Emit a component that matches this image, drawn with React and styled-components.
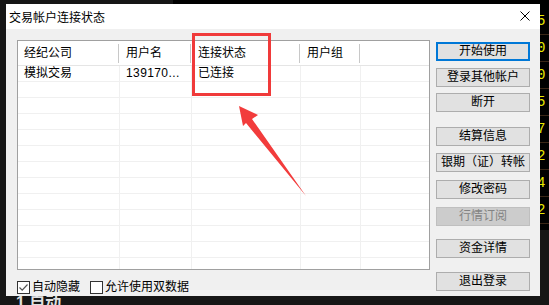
import React from "react";
import styled, { createGlobalStyle } from "styled-components";

const Global = createGlobalStyle`
  html, body { margin: 0; padding: 0; background: #121212; }
  * { box-sizing: border-box; }
`;

const FONT = `"Liberation Sans", "Noto Sans CJK SC", sans-serif`;

const Root = styled.div`
  position: relative;
  width: 549px;
  height: 305px;
  overflow: hidden;
  background: #161616;
  padding: 4px 9px 9px 6px;
  font-family: ${FONT};
  font-size: 12px;
  color: #000;
`;

/* backdrop app behind the dialog */
const QuoteColumn = styled.div`
  position: absolute;
  left: 535px;
  top: 0;
  width: 14px;
  height: 230px;
  background: #000;
  display: flex;
  flex-direction: column;
  padding-top: 8px;
`;
const QuoteCell = styled.div`
  height: 27px;
  border-bottom: 1px solid #3a2616;
  color: #e8e800;
  font-family: "Liberation Mono", monospace;
  font-size: 14px;
  line-height: 26px;
  padding-left: 2px;
`;
const TopStrip = styled.div`
  position: absolute;
  left: 173px;
  top: 0;
  width: 376px;
  height: 4px;
  background: #000;
`;
const BottomText = styled.div`
  position: absolute;
  left: 16px;
  top: 289px;
  color: #e0e0e0;
  font-size: 16px;
  font-weight: bold;
  font-family: ${FONT};
`;

const Dialog = styled.div`
  position: relative;
  z-index: 1;
  width: 534px;
  height: 292px;
  display: flex;
  flex-direction: column;
  background: #f0f0f0;
`;

const TitleBar = styled.div`
  height: 25px;
  background: #fff;
  display: flex;
  align-items: center;
  justify-content: space-between;
  padding: 0 10px 1px 3px;
  font-size: 12px;
`;

const CloseBox = styled.div`
  width: 10px;
  height: 10px;
  display: flex;
`;

const Body = styled.div`
  flex: 1;
  display: grid;
  grid-template-columns: 413px 94px;
  grid-template-rows: 230px auto;
  column-gap: 6px;
  row-gap: 7px;
  padding: 11px 10px 0 11px;
`;

const ListBox = styled.div`
  border: 1px solid #a0a0a0;
  background: #fff;
  overflow: hidden;
`;

const Row = styled.div`
  display: grid;
  grid-template-columns: 102px 72px 109px 60px 1fr;
  height: ${(p) => (p.$header ? 25 : 16)}px;
  border-bottom: 1px solid ${(p) => (p.$header ? "#e5e5e5" : "#f0f0f0")};
`;

const Cell = styled.div`
  display: flex;
  align-items: center;
  padding-left: 6px;
  white-space: nowrap;
  overflow: hidden;
  font-size: 12px;
  line-height: 15px;
  letter-spacing: ${(p) => (p.$spaced ? "0.4px" : "0")};
  border-right: 1px solid ${(p) => (p.$last || p.$header ? "transparent" : "#f0f0f0")};
  position: relative;
  ${(p) =>
    p.$header && !p.$last
      ? `&::after{content:"";position:absolute;right:0;top:3px;bottom:2px;width:1px;background:#c8c8c8;}`
      : ""}
`;

const ButtonCol = styled.div`
  grid-row: 1 / span 2;
  grid-column: 2;
  display: flex;
  flex-direction: column;
  padding-top: 2px;
`;

const Btn = styled.button`
  height: 19px;
  width: 94px;
  margin-top: ${(p) => p.$mt || 0}px;
  padding: 0;
  font-family: ${FONT};
  font-size: 12px;
  line-height: 15px;
  color: ${(p) => (p.disabled ? "#838383" : "#000")};
  background: ${(p) => (p.disabled ? "#cccccc" : "#e1e1e1")};
  border: ${(p) =>
    p.$default ? "2px solid #0078d7" : p.disabled ? "1px solid #bfbfbf" : "1px solid #adadad"};
  border-radius: 0;
  display: flex;
  align-items: center;
  justify-content: center;
`;

const CheckRow = styled.div`
  grid-row: 2;
  grid-column: 1;
  display: flex;
  align-items: center;
  padding-top: 1px;
`;

const CheckLabel = styled.label`
  display: flex;
  align-items: center;
  gap: 2px;
  margin-right: ${(p) => p.$mr || 0}px;
  font-size: 12px;
  line-height: 14px;
`;

const Box = styled.span`
  width: 13px;
  height: 13px;
  border: 1px solid #333;
  background: #fff;
  display: inline-flex;
  align-items: center;
  justify-content: center;
`;

const Overlay = styled.svg`
  position: absolute;
  left: 0;
  top: 0;
  z-index: 2;
  pointer-events: none;
`;

const columns = ["经纪公司", "用户名", "连接状态", "用户组", ""];

const buttons = [
  { label: "开始使用", mt: 0, def: true },
  { label: "登录其他帐户", mt: 7 },
  { label: "断开", mt: 6 },
  { label: "结算信息", mt: 15 },
  { label: "银期（证）转帐", mt: 7 },
  { label: "修改密码", mt: 8 },
  { label: "行情订阅", mt: 8, disabled: true },
  { label: "资金详情", mt: 13 },
  { label: "退出登录", mt: 14 },
];

const quotes = ["5", "0", "0", "5", "7", "2", "4", "2"];

export default function App() {
  const emptyRows = Array.from({ length: 12 });
  return (
    <Root>
      <Global />
      <TopStrip />
      <QuoteColumn>
        {quotes.map((q, i) => (
          <QuoteCell key={i}>{q}</QuoteCell>
        ))}
      </QuoteColumn>
      <BottomText>1.自动</BottomText>

      <Dialog>
        <TitleBar>
          <span>交易帐户连接状态</span>
          <CloseBox>
            <svg width="10" height="10" viewBox="0 0 10 10">
              <path d="M0.5 0.5 L9.5 9.5 M9.5 0.5 L0.5 9.5" stroke="#000" strokeWidth="1" />
            </svg>
          </CloseBox>
        </TitleBar>
        <Body>
          <ListBox>
            <Row $header>
              {columns.map((c, i) => (
                <Cell key={i} $header $last={i === 4}>
                  {c}
                </Cell>
              ))}
            </Row>
            <Row>
              <Cell>模拟交易</Cell>
              <Cell $spaced>139170...</Cell>
              <Cell>已连接</Cell>
              <Cell />
              <Cell $last />
            </Row>
            {emptyRows.map((_, r) => (
              <Row key={r}>
                <Cell />
                <Cell />
                <Cell />
                <Cell />
                <Cell $last />
              </Row>
            ))}
          </ListBox>
          <ButtonCol>
            {buttons.map((b) => (
              <Btn key={b.label} $mt={b.mt} $default={b.def} disabled={b.disabled}>
                {b.label}
              </Btn>
            ))}
          </ButtonCol>
          <CheckRow>
            <CheckLabel $mr={10}>
              <Box>
                <svg width="11" height="11" viewBox="0 0 11 11">
                  <path d="M1.5 5.5 L4.2 8.2 L9.5 2.5" fill="none" stroke="#555" strokeWidth="1.2" />
                </svg>
              </Box>
              自动隐藏
            </CheckLabel>
            <CheckLabel>
              <Box />
              允许使用双数据
            </CheckLabel>
          </CheckRow>
        </Body>
      </Dialog>

      <Overlay width="549" height="305" viewBox="0 0 549 305">
        <rect x="193.5" y="34.5" width="76" height="60" fill="none" stroke="#f03a3a" strokeWidth="3" />
        <polygon
          points="239,106 258,115 252,119 306,196 246,123 243,126"
          fill="#f23c3c"
        />
      </Overlay>
    </Root>
  );
}
